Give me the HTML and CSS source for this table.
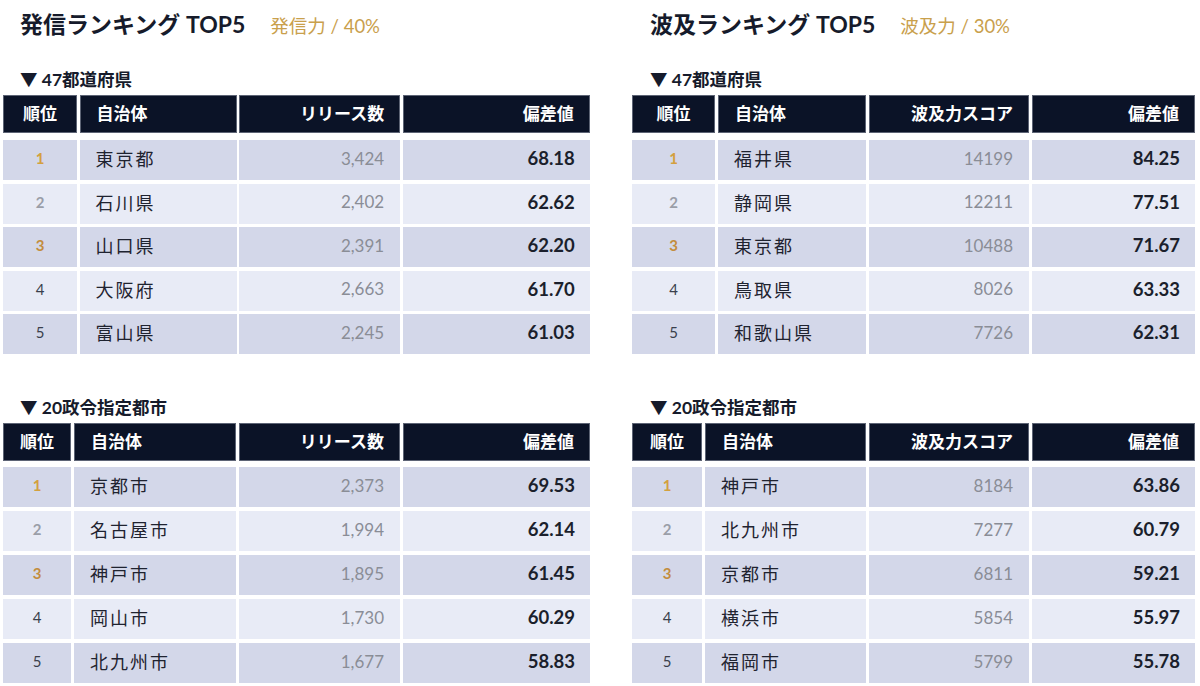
FILE: index.html
```html
<!DOCTYPE html>
<html lang="ja">
<head>
<meta charset="utf-8">
<link rel="stylesheet" href="styles.css">
</head>
<body>
<div class="page">
  <section class="panel left">
    <h1 class="title">発信ランキング TOP5<span class="sub">発信力 / 40%</span></h1>
    <div class="label">▼ 47都道府県</div>
    <div class="tbl t-lt">
      <div class="hd c">順位</div><div class="hd">自治体</div><div class="hd r">リリース数</div><div class="hd r">偏差値</div>
      <div class="rk c odd g1">1</div><div class="nm odd">東京都</div><div class="ct odd">3,424</div><div class="sc odd">68.18</div>
      <div class="rk c even g2">2</div><div class="nm even">石川県</div><div class="ct even">2,402</div><div class="sc even">62.62</div>
      <div class="rk c odd g3">3</div><div class="nm odd">山口県</div><div class="ct odd">2,391</div><div class="sc odd">62.20</div>
      <div class="rk c even">4</div><div class="nm even">大阪府</div><div class="ct even">2,663</div><div class="sc even">61.70</div>
      <div class="rk c odd">5</div><div class="nm odd">富山県</div><div class="ct odd">2,245</div><div class="sc odd">61.03</div>
    </div>
    <div class="label second">▼ 20政令指定都市</div>
    <div class="tbl t-lb">
      <div class="hd c">順位</div><div class="hd">自治体</div><div class="hd r">リリース数</div><div class="hd r">偏差値</div>
      <div class="rk c odd g1">1</div><div class="nm odd">京都市</div><div class="ct odd">2,373</div><div class="sc odd">69.53</div>
      <div class="rk c even g2">2</div><div class="nm even">名古屋市</div><div class="ct even">1,994</div><div class="sc even">62.14</div>
      <div class="rk c odd g3">3</div><div class="nm odd">神戸市</div><div class="ct odd">1,895</div><div class="sc odd">61.45</div>
      <div class="rk c even">4</div><div class="nm even">岡山市</div><div class="ct even">1,730</div><div class="sc even">60.29</div>
      <div class="rk c odd">5</div><div class="nm odd">北九州市</div><div class="ct odd">1,677</div><div class="sc odd">58.83</div>
    </div>
  </section>
  <section class="panel right">
    <h1 class="title">波及ランキング TOP5<span class="sub">波及力 / 30%</span></h1>
    <div class="label">▼ 47都道府県</div>
    <div class="tbl t-rt">
      <div class="hd c">順位</div><div class="hd">自治体</div><div class="hd r">波及力スコア</div><div class="hd r">偏差値</div>
      <div class="rk c odd g1">1</div><div class="nm odd">福井県</div><div class="ct odd">14199</div><div class="sc odd">84.25</div>
      <div class="rk c even g2">2</div><div class="nm even">静岡県</div><div class="ct even">12211</div><div class="sc even">77.51</div>
      <div class="rk c odd g3">3</div><div class="nm odd">東京都</div><div class="ct odd">10488</div><div class="sc odd">71.67</div>
      <div class="rk c even">4</div><div class="nm even">鳥取県</div><div class="ct even">8026</div><div class="sc even">63.33</div>
      <div class="rk c odd">5</div><div class="nm odd">和歌山県</div><div class="ct odd">7726</div><div class="sc odd">62.31</div>
    </div>
    <div class="label second">▼ 20政令指定都市</div>
    <div class="tbl t-rb">
      <div class="hd c">順位</div><div class="hd">自治体</div><div class="hd r">波及力スコア</div><div class="hd r">偏差値</div>
      <div class="rk c odd g1">1</div><div class="nm odd">神戸市</div><div class="ct odd">8184</div><div class="sc odd">63.86</div>
      <div class="rk c even g2">2</div><div class="nm even">北九州市</div><div class="ct even">7277</div><div class="sc even">60.79</div>
      <div class="rk c odd g3">3</div><div class="nm odd">京都市</div><div class="ct odd">6811</div><div class="sc odd">59.21</div>
      <div class="rk c even">4</div><div class="nm even">横浜市</div><div class="ct even">5854</div><div class="sc even">55.97</div>
      <div class="rk c odd">5</div><div class="nm odd">福岡市</div><div class="ct odd">5799</div><div class="sc odd">55.78</div>
    </div>
  </section>
</div>
</body>
</html>
```
FILE: styles.css
```css
* { box-sizing: border-box; margin: 0; padding: 0; }
html, body { background: #ffffff; }
body {
  font-family: "Lato", "Noto Sans CJK JP", sans-serif;
  color: #1b1f2c;
  width: 1200px;
  height: 686px;
  overflow: hidden;
}
.page {
  display: grid;
  grid-template-columns: 587px 563px;
  column-gap: 42px;
  padding-left: 3px;
}
.title {
  margin-top: 9px;
  margin-left: 17px;
  height: 30px;
  line-height: 30px;
  font-size: 23px;
  font-weight: 700;
  color: #161b2b;
  white-space: nowrap;
}
.sub {
  margin-left: 25px;
  font-size: 18.5px;
  font-weight: 400;
  color: #c9a04c;
}
.label {
  margin-top: 31px;
  margin-left: 17px;
  height: 20px;
  line-height: 20px;
  font-size: 17.5px;
  font-weight: 700;
  color: #161b2b;
  margin-bottom: 5px;
}
.label.second { margin-top: 44px; }
.right .title, .right .label { margin-left: 18px; }

.tbl {
  display: grid;
  grid-template-rows: 41.5px repeat(5, 40px);
  row-gap: 3.5px;
}
.t-lt { grid-template-columns: 74px 157px 161px 187px; column-gap: 2.6px; }
.t-lb { grid-template-columns: 68px 162px 161px 187px; column-gap: 3px; }
.t-rt { grid-template-columns: 83px 148px 160px 163px; column-gap: 3px; }
.t-rb { grid-template-columns: 70px 161px 160px 163px; column-gap: 3px; }
.t-lb, .t-rb { row-gap: 4px; grid-template-rows: 40px repeat(5, 40px); }

.tbl > div {
  display: flex;
  align-items: center;
  white-space: nowrap;
  padding-bottom: 4px;
}
.hd {
  background: #0b1327;
  color: #ffffff;
  font-size: 17px;
  font-weight: 700;
  padding: 0 16px;
  border: 1px solid #5d6475;
  margin-bottom: 3.5px;
}
.t-lb .hd, .t-rb .hd { margin-bottom: 2px; }
.tbl > .hd { padding-bottom: 3px; }
.hd.c { justify-content: center; padding-left: 0; padding-right: 0; }
.hd.r { justify-content: flex-end; padding-right: 15px; }
.odd { background: #d3d7e9; }
.even { background: #e8ebf6; }
.rk {
  justify-content: center;
  font-size: 15px;
  color: #3a3f4c;
}
.rk.g1 { color: #d4a03e; font-weight: 700; }
.rk.g2 { color: #9a9ea8; font-weight: 700; }
.rk.g3 { color: #c38d3e; font-weight: 700; }
.nm {
  padding-left: 16px;
  font-size: 18px;
  color: #1f2330;
  letter-spacing: 2px;
}
.ct {
  justify-content: flex-end;
  padding-right: 16px;
  font-size: 17px;
  color: #8a8d96;
}
.sc {
  justify-content: flex-end;
  padding-right: 15px;
  font-size: 18.5px;
  font-weight: 700;
  color: #1b1f2c;
}
```
